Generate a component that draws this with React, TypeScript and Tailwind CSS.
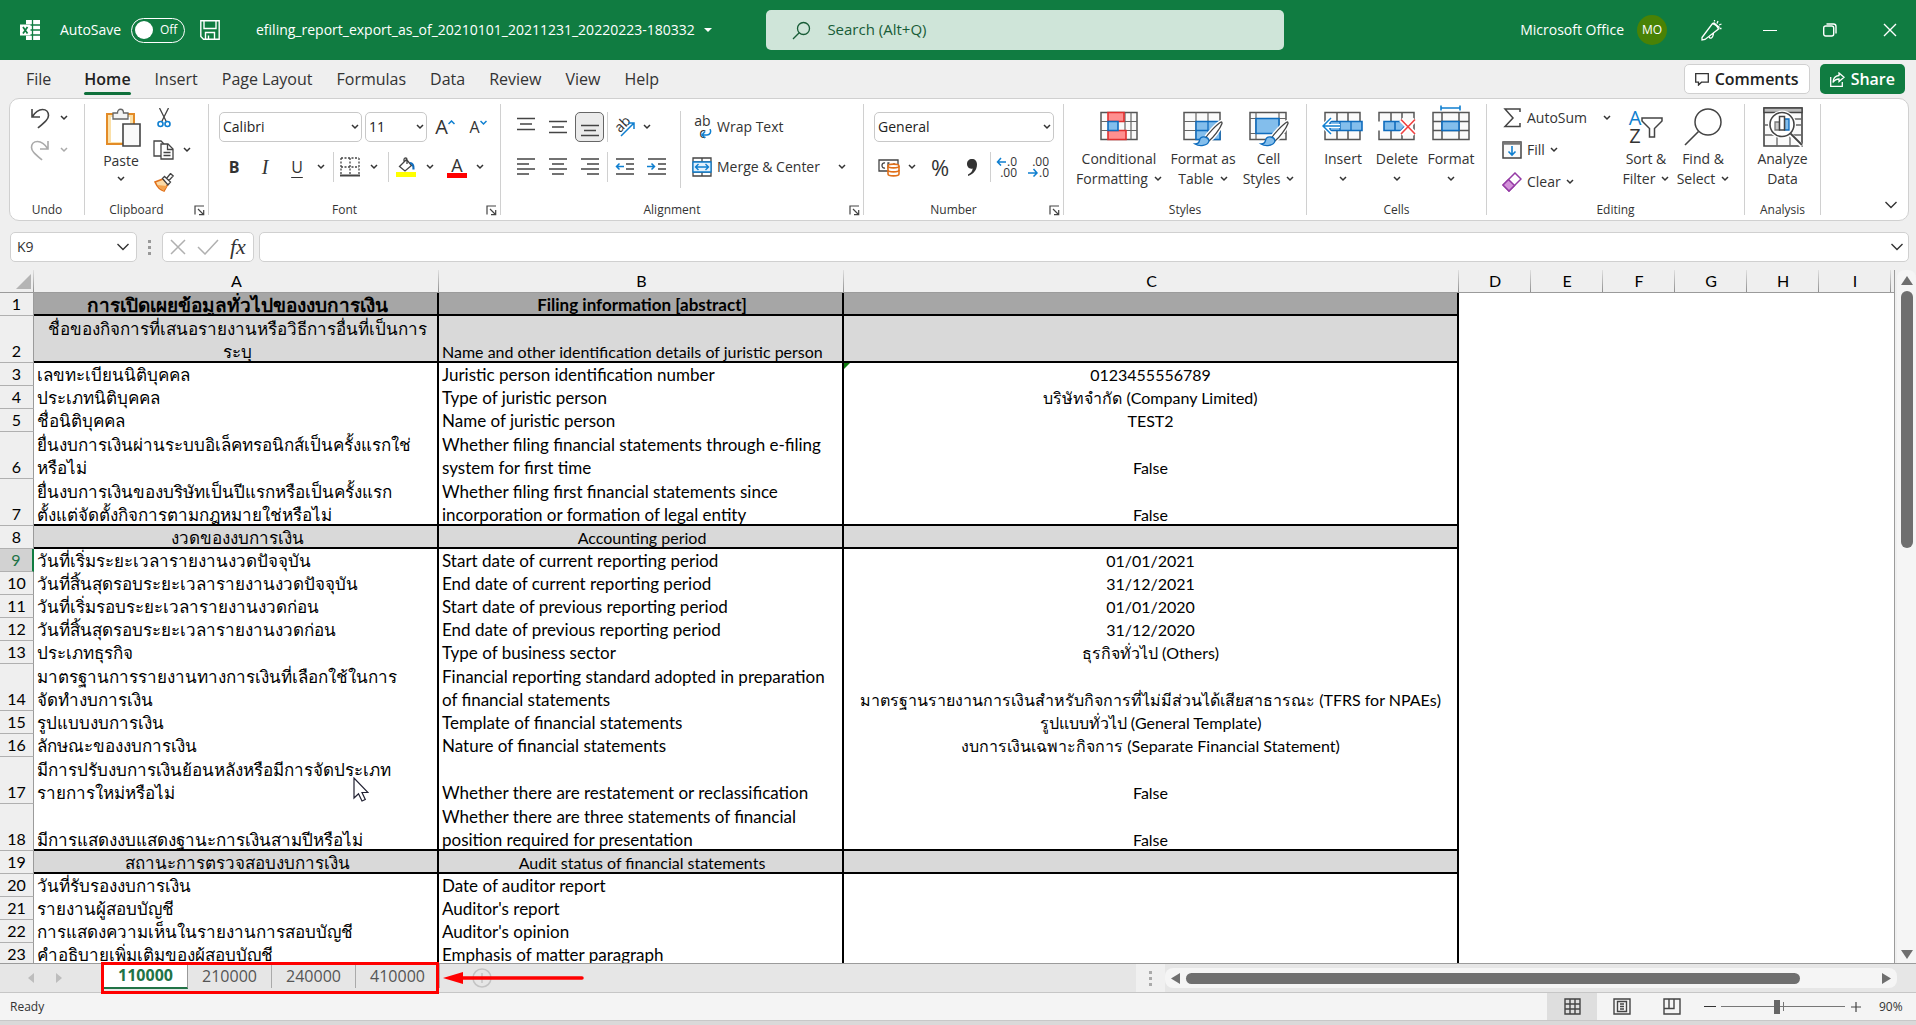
import type { ReactNode } from 'react';

const tabs = ['Insert', 'Page Layout', 'Formulas', 'Data', 'Review', 'View', 'Help'];
const sheets = ['110000', '210000', '240000', '410000'];

type Row = { kind?: 'title' | 'section'; a: string; b: string; c?: string; line?: boolean; tall?: boolean };

const rows: Row[] = [
  { kind: 'title', a: 'การเปิดเผยข้อมูลทั่วไปของงบการเงิน', b: 'Filing information [abstract]' },
  {
    kind: 'section',
    a: 'ชื่อของกิจการที่เสนอรายงานหรือวิธีการอื่นที่เป็นการ\nระบุ',
    b: 'Name and other identification details of juristic person',
    tall: true,
  },
  { a: 'เลขทะเบียนนิติบุคคล', b: 'Juristic person identification number', c: '0123455556789' },
  { a: 'ประเภทนิติบุคคล', b: 'Type of juristic person', c: 'บริษัทจำกัด (Company Limited)' },
  { a: 'ชื่อนิติบุคคล', b: 'Name of juristic person', c: 'TEST2' },
  {
    a: 'ยื่นงบการเงินผ่านระบบอิเล็คทรอนิกส์เป็นครั้งแรกใช่\nหรือไม่',
    b: 'Whether filing financial statements through e-filing\nsystem for first time',
    c: 'False',
    tall: true,
  },
  {
    a: 'ยื่นงบการเงินของบริษัทเป็นปีแรกหรือเป็นครั้งแรก\nตั้งแต่จัดตั้งกิจการตามกฎหมายใช่หรือไม่',
    b: 'Whether filing first financial statements since\nincorporation or formation of legal entity',
    c: 'False',
    tall: true,
    line: true,
  },
  { kind: 'section', a: 'งวดของงบการเงิน', b: 'Accounting period' },
  { a: 'วันที่เริ่มระยะเวลารายงานงวดปัจจุบัน', b: 'Start date of current reporting period', c: '01/01/2021' },
  { a: 'วันที่สิ้นสุดรอบระยะเวลารายงานงวดปัจจุบัน', b: 'End date of current reporting period', c: '31/12/2021' },
  { a: 'วันที่เริ่มรอบระยะเวลารายงานงวดก่อน', b: 'Start date of previous reporting period', c: '01/01/2020' },
  { a: 'วันที่สิ้นสุดรอบระยะเวลารายงานงวดก่อน', b: 'End date of previous reporting period', c: '31/12/2020' },
  { a: 'ประเภทธุรกิจ', b: 'Type of business sector', c: 'ธุรกิจทั่วไป (Others)' },
  {
    a: 'มาตรฐานการรายงานทางการเงินที่เลือกใช้ในการ\nจัดทำงบการเงิน',
    b: 'Financial reporting standard adopted in preparation\nof financial statements',
    c: 'มาตรฐานรายงานการเงินสำหรับกิจการที่ไม่มีส่วนได้เสียสาธารณะ (TFRS for NPAEs)',
    tall: true,
  },
  { a: 'รูปแบบงบการเงิน', b: 'Template of financial statements', c: 'รูปแบบทั่วไป (General Template)' },
  { a: 'ลักษณะของงบการเงิน', b: 'Nature of financial statements', c: 'งบการเงินเฉพาะกิจการ (Separate Financial Statement)' },
  {
    a: 'มีการปรับงบการเงินย้อนหลังหรือมีการจัดประเภท\nรายการใหม่หรือไม่',
    b: 'Whether there are restatement or reclassification',
    c: 'False',
    tall: true,
  },
  {
    a: 'มีการแสดงงบแสดงฐานะการเงินสามปีหรือไม่',
    b: 'Whether there are three statements of financial\nposition required for presentation',
    c: 'False',
    tall: true,
    line: true,
  },
  { kind: 'section', a: 'สถานะการตรวจสอบงบการเงิน', b: 'Audit status of financial statements' },
  { a: 'วันที่รับรองงบการเงิน', b: 'Date of auditor report' },
  { a: 'รายงานผู้สอบบัญชี', b: "Auditor's report" },
  { a: 'การแสดงความเห็นในรายงานการสอบบัญชี', b: "Auditor's opinion" },
  { a: 'คำอธิบายเพิ่มเติมของผู้สอบบัญชี', b: 'Emphasis of matter paragraph' },
];

/* Small helpers */
const Icon = ({ w, h, children }: { w: number; h: number; children: ReactNode }) => (
  <svg width={w} height={h} viewBox={`0 0 ${w} ${h}`} fill="none" stroke="#444" strokeWidth="1.3" className="shrink-0" aria-hidden="true">
    {children}
  </svg>
);

const Chevron = ({ className = 'text-[#333]' }: { className?: string }) => (
  <svg width="8" height="6" viewBox="0 0 8 6" fill="none" stroke="currentColor" strokeWidth="1.5" className={`shrink-0 ${className}`} aria-hidden="true">
    <path d="M1 1l3 3 3-3" />
  </svg>
);

const BigChevron = () => (
  <svg width="14" height="8" viewBox="0 0 14 8" fill="none" stroke="#333" strokeWidth="1.4" aria-hidden="true">
    <path d="M1.500 1l5.500 5.500L12.500 1" />
  </svg>
);

const Sep = () => <div className="h-[30px] w-px bg-[#d0d0d0]" />;

const Tool = ({ label, className = 'w-8', children }: { label: string; className?: string; children: ReactNode }) => (
  <button aria-label={label} className={`flex h-[30px] shrink-0 items-center justify-center ${className}`}>
    {children}
  </button>
);

const Group = ({ name, width, launcher, children }: { name: string; width: string; launcher?: boolean; children: ReactNode }) => (
  <section className={`flex h-[111px] shrink-0 flex-col border-r border-[#d0d0d0] ${width}`}>
    <div className="flex flex-1 items-start">{children}</div>
    <div className="flex h-[10px] shrink-0 items-center px-[2px]">
      <span className="flex-1 text-center text-xs leading-4 text-[#333]">{name}</span>
      {launcher && (
        <button aria-label={`${name} settings`} className="ml-2 block w-3">
          <svg width="11" height="11" viewBox="0 0 11 11" fill="none" stroke="#444" strokeWidth="1.2">
            <path d="M1 9.500V1h9M4 4l5.500 5.500M9.700 5v4.700H5" />
          </svg>
        </button>
      )}
    </div>
  </section>
);

const BigButton = ({ lines, width, children, chevron }: { lines: string[]; width: string; chevron?: 'inline' | 'below'; children: ReactNode }) => (
  <button className={`flex shrink-0 flex-col items-center ${width}`}>
    <span className="flex h-[45px] items-center">{children}</span>
    {lines.map((line, i) => (
      <span key={line} className="flex items-center gap-[6px] text-sm leading-5 whitespace-nowrap">
        {line}
        {chevron === 'inline' && i === lines.length - 1 && <Chevron />}
      </span>
    ))}
    {chevron === 'below' && (
      <span className="flex h-5 items-center">
        <Chevron />
      </span>
    )}
  </button>
);

const Combo = ({ label, value, width }: { label: string; value: string; width: string }) => (
  <span className={`relative flex h-[30px] items-center ${width}`}>
    <select aria-label={label} className="h-full w-full appearance-none rounded-[5px] border border-[#c8c8c8] bg-white px-[3px] text-sm text-[#222]">
      <option>{value}</option>
    </select>
    <span className="pointer-events-none absolute right-[3px]">
      <Chevron />
    </span>
  </span>
);

/* Horizontal stroke sets for the alignment buttons */
const Lines = ({ d }: { d: string }) => (
  <Icon w={20} h={20}>
    <path d={d} strokeWidth="1.500" />
  </Icon>
);

const TableGrid = () => (
  <>
    <path d="M1 7.500h36v27H1z" fill="#fafafa" stroke="#555" strokeWidth="1.500" />
    <path d="M13 7.500v27M25 7.500v27M1 16.500h36M1 25.500h36" stroke="#666" strokeWidth="1.200" />
  </>
);

const Brush = () => (
  <>
    <path d="M38 17c-5 3-13 12-15.500 16l3.500 3c4-3 11-12 13-17.500 0-1.300-.3-1.700-1-1.500z" fill="#fff" stroke="#fff" strokeWidth="4" />
    <path d="M38 17c-5 3-13 12-15.500 16l3.500 3c4-3 11-12 13-17.500 0-1.300-.3-1.700-1-1.500z" fill="#fff" stroke="#444" />
    <path d="M22 32c-3-.5-5 1-5.500 3.500-.5 2.500-2 3.500-4.500 3.500 4 2.500 13 2.500 14-3.500-.5-2-2-3.200-4-3.500z" fill="#83beec" stroke="#0f6cbd" />
  </>
);

/* Green bar */
const TitleBar = () => (
  <header className="grid h-[60px] shrink-0 grid-cols-[40fr_27fr_33fr] items-center bg-[#107c41] text-sm text-white">
    <div className="flex items-center pl-5">
      <svg width="20" height="20" viewBox="0 0 20 20" aria-hidden="true">
        <path d="M6 0h14v20H6z" fill="#fff" />
        <path d="M12.500 0v20M6 5h14M6 10h14M6 15h14" stroke="#107c41" strokeWidth="1.300" />
        <path d="M0 4.500h10.500v11H0z" fill="#fff" />
        <path d="M3 7l4.500 6.500M7.500 7L3 13.500" stroke="#107c41" strokeWidth="1.700" />
      </svg>
      <label htmlFor="autosave" className="ml-5 w-[71px]">
        AutoSave
      </label>
      <span className="relative flex h-[25px] w-[54px] items-center rounded-full border border-white">
        <input id="autosave" type="checkbox" role="switch" className="absolute inset-0 appearance-none" />
        <span className="ml-[3px] size-[18px] rounded-full bg-white" />
        <span className="ml-[7px] text-xs">Off</span>
      </span>
      <button aria-label="Save" className="ml-[15px]">
        <svg width="20" height="20" viewBox="0 0 20 20" fill="none" stroke="#fff" strokeWidth="1.400">
          <path d="M.8.800h18.400v18.400H3.500L.8 16.500zM4 1v7.500h12V1M5.500 19v-6.500h9V19M8.500 19v-3.500" />
        </svg>
      </button>
      <button className="ml-9 flex items-center gap-[9px] whitespace-nowrap">
        efiling_report_export_as_of_20210101_20211231_20220223-180332
        <svg width="8" height="4" viewBox="0 0 8 4" fill="#fff">
          <path d="M0 0h8L4 4z" />
        </svg>
      </button>
    </div>
    <div className="flex h-10 items-center rounded-[5px] bg-[#cfe5d9] pl-[26px] text-[#185c37]">
      <svg width="19" height="19" viewBox="0 0 19 19" fill="none" stroke="#185c37" strokeWidth="1.300" aria-hidden="true">
        <circle cx="11.500" cy="7.500" r="6" />
        <path d="M7.200 11.700L1 18" />
      </svg>
      <input
        aria-label="Search"
        placeholder="Search (Alt+Q)"
        className="ml-4 flex-1 bg-transparent text-[15px] outline-none placeholder:text-[#185c37]"
      />
    </div>
    <div className="flex items-center justify-end pr-[19px]">
      <span>Microsoft Office</span>
      <span className="ml-[13px] flex size-[30px] items-center justify-center rounded-full bg-[#498205] text-xs">MO</span>
      <button aria-label="Drawing" className="ml-[34px]">
        <svg width="21" height="21" viewBox="0 0 21 21" fill="none" stroke="#fff" strokeWidth="1.300">
          <path d="M1 17.500L11.500 3.500c2 .5 5 3 6 5.500L4 19.500l-3 .5zM8 16c0 3 4 3.500 4.500-3M12.500 2.500l6 5M13.500 0v1.500M17 1l-1 2.500M20.500 4L18 5M20.500 8.500h-2" />
        </svg>
      </button>
      <button aria-label="Minimize" className="ml-[41px] h-[3px] w-[14px]">
        <span className="block h-px bg-white" />
      </button>
      <button aria-label="Restore" className="ml-[46px]">
        <svg width="14" height="14" viewBox="0 0 14 14" fill="none" stroke="#fff" strokeWidth="1.400">
          <rect x=".7" y="3" width="10" height="10" rx="2" />
          <path d="M3.500 1h7c1.500 0 2.500 1 2.500 2.500v7" />
        </svg>
      </button>
      <button aria-label="Close" className="ml-[46px]">
        <svg width="14" height="14" viewBox="0 0 14 14" fill="none" stroke="#fff" strokeWidth="1.400">
          <path d="M1 1l12 12M13 1L1 13" />
        </svg>
      </button>
    </div>
  </header>
);

const MenuTabs = () => (
  <nav className="flex h-[38px] shrink-0 items-center pr-[11px] pl-[26px] text-base text-[#333]">
    <button className="mr-[33px]">File</button>
    <button className="relative mr-6 font-semibold text-[#222]">
      Home
      <span className="absolute inset-x-0 -bottom-1 h-[3px] rounded-sm bg-[#0f703b]" />
    </button>
    <div className="flex gap-6">
      {tabs.map((tab) => (
        <button key={tab}>{tab}</button>
      ))}
    </div>
    <button className="ml-auto flex h-[30px] items-center gap-[6px] rounded-[5px] border border-[#d0d0d0] bg-white px-[10px] font-semibold text-[#222]">
      <svg width="14" height="13" viewBox="0 0 14 13" fill="none" stroke="#333" strokeWidth="1.300">
        <path d="M.7.700h12.600v8.500H6.500L3.500 12V9.200H.7z" />
      </svg>
      Comments
    </button>
    <button className="ml-[10px] flex h-[30px] items-center gap-[6px] rounded-[5px] bg-[#107c41] px-[10px] font-semibold text-white">
      <svg width="15" height="15" viewBox="0 0 15 15" fill="none" stroke="#fff" strokeWidth="1.300">
        <path d="M.7 5v9.300h11.600V10M9 1l5 4.300-5 4.200V7C6 7 4.500 8 3 10.500 3.200 6 5.500 3.800 9 3.500z" />
      </svg>
      Share
    </button>
  </nav>
);

const Ribbon = () => (
  <div className="mr-[7px] ml-[9px] flex shrink-0 rounded-[10px] border border-[#d0d0d0] bg-white py-[5px] text-[#333]">
    <Group name="Undo" width="w-[75px]">
      <div className="flex w-full flex-col pl-5">
        <button aria-label="Undo" className="flex h-7 items-center gap-[10px]">
          <Icon w={20} h={22}>
            <path d="M2 2v8h8M2.300 9.700C5 5.500 8.500 2.500 12.500 2.500c4 0 6 3 6 6 0 3.500-3 6-10.500 12.500" strokeWidth="1.600" />
          </Icon>
          <Chevron />
        </button>
        <button aria-label="Redo" className="mt-1 flex h-7 items-center gap-[10px]">
          <svg width="20" height="22" viewBox="0 0 20 22" fill="none" stroke="#aaa" strokeWidth="1.600">
            <path d="M18 2v8h-8M17.700 9.700C15 5.500 11.500 2.500 7.500 2.500c-4 0-6 3-6 6C1.500 12 4.500 14.500 12 21" />
          </svg>
          <Chevron className="text-[#aaa]" />
        </button>
      </div>
    </Group>

    <Group name="Clipboard" width="w-[124px]" launcher>
      <button className="ml-[10px] flex w-[52px] flex-col items-center pt-1 text-sm leading-5">
        <span className="pl-1">
          <Icon w={36} h={40}>
            <path d="M2 6h27v30H2z" fill="#fbe0a8" stroke="#e38b27" strokeWidth="2" />
            <path d="M6 9h19v25H6z" fill="#fff" stroke="none" />
            <path d="M8 11V5h4.500c0-5 6-5 6 0H23v6z" fill="#f3f3f3" stroke="#666" />
            <path d="M18 16h17v22H18z" fill="#fafafa" stroke="#444" strokeWidth="1.600" />
          </Icon>
        </span>
        <span className="mt-[3px]">Paste</span>
        <span className="flex h-4 items-center">
          <Chevron />
        </span>
      </button>
      <div className="ml-[6px] flex flex-col">
        <button aria-label="Cut" className="flex h-7 w-[22px] items-center justify-center">
          <Icon w={14} h={20}>
            <path d="M2.500 0l7 14M11.500 0l-7 14" />
            <circle cx="3.500" cy="16" r="2.500" stroke="#0f7fd0" strokeWidth="1.600" />
            <circle cx="10.500" cy="16" r="2.500" stroke="#0f7fd0" strokeWidth="1.600" />
          </Icon>
        </button>
        <button aria-label="Copy" className="mt-1 flex h-7 items-center gap-[9px]">
          <Icon w={21} h={20}>
            <path d="M8 16H1V1h7l3 3" />
            <path d="M8 4h7l5 5v10H8z" fill="#fff" />
            <path d="M14.500 4v5.500H20M10.500 12.500h7M10.500 15.500h7" />
          </Icon>
          <Chevron />
        </button>
        <button aria-label="Format painter" className="mt-1 flex h-7 w-[22px] items-center justify-center">
          <Icon w={20} h={19}>
            <path d="M1 9l8-3 5 5-4 7C6 17 3 13.500 1 9z" fill="#fbd9a5" stroke="#e0701a" strokeWidth="1.600" />
            <path d="M3 12l10 1-3.500 5z" fill="#f3a24c" stroke="none" />
            <path d="M8.500 5.500l2-2 6 5.500-2.500 3zM12.500 5.500l4-5 2.700 2.500-4.500 4.700" fill="#fff" />
          </Icon>
        </button>
      </div>
    </Group>

    <Group name="Font" width="w-[292px]" launcher>
      <div className="flex flex-col gap-[10px] pt-2 pl-[10px]">
        <div className="flex items-center">
          <Combo label="Font" value="Calibri" width="w-[143px]" />
          <span className="w-[3px]" />
          <Combo label="Font size" value="11" width="w-[62px]" />
          <Tool label="Increase font size" className="ml-[7px] w-[22px]">
            <span className="text-xl leading-6">A</span>
            <svg width="7" height="15" viewBox="0 0 7 15" fill="none" stroke="#0f7fd0" strokeWidth="1.500">
              <path d="M.5 4l3-3 3 3" />
            </svg>
          </Tool>
          <Tool label="Decrease font size" className="ml-3 w-[20px]">
            <span className="text-base leading-6">A</span>
            <svg width="7" height="15" viewBox="0 0 7 15" fill="none" stroke="#0f7fd0" strokeWidth="1.500">
              <path d="M.5 1l3 3 3-3" />
            </svg>
          </Tool>
        </div>
        <div className="flex items-center">
          <Tool label="Bold" className="w-[30px]">
            <span className="text-base font-bold">B</span>
          </Tool>
          <Tool label="Italic">
            <span className="font-['Liberation_Serif',serif] text-xl italic">I</span>
          </Tool>
          <Tool label="Underline">
            <span className="text-base leading-5 underline underline-offset-4">U</span>
          </Tool>
          <Tool label="Underline style" className="w-[16px]">
            <Chevron />
          </Tool>
          <span className="w-1" />
          <Sep />
          <Tool label="Borders">
            <Icon w={20} h={20}>
              <path d="M1 1h18M1 1v17M19 1v17M10 1v17M1 10h18" strokeDasharray="2 1.500" />
              <path d="M0 18.500h20" strokeWidth="2" />
            </Icon>
          </Tool>
          <Tool label="Border style" className="w-[16px]">
            <Chevron />
          </Tool>
          <span className="w-[6px]" />
          <Sep />
          <Tool label="Fill color" className="w-[34px]">
            <Icon w={20} h={20}>
              <path d="M3.500 9.500l7-7 5 6-6.500 5.500zM8 6V2.500C8 .5 11 .5 11 2.500V7" />
              <path d="M14 6c2 0 4 2 3.500 6.500" stroke="#0f6cbd" strokeWidth="2.200" />
              <path d="M0 15h20v5H0z" fill="#ff0" stroke="none" />
            </Icon>
          </Tool>
          <Tool label="Fill options" className="w-[14px]">
            <Chevron />
          </Tool>
          <Tool label="Font color" className="ml-1 w-8">
            <span className="flex flex-col items-center">
              <span className="h-4 text-lg leading-4">A</span>
              <span className="h-[5px] w-5 bg-[#f00]" />
            </span>
          </Tool>
          <Tool label="Font color options" className="w-[14px]">
            <Chevron />
          </Tool>
        </div>
      </div>
    </Group>

    <Group name="Alignment" width="w-[363px]" launcher>
      <div className="flex flex-col gap-[10px] pt-2 pl-[9px]">
        <div className="flex items-center">
          <Tool label="Top align">
            <Lines d="M1 1.500h18M4 7h12M1 12.500h18" />
          </Tool>
          <Tool label="Middle align">
            <Lines d="M1 4.500h18M4 10h12M1 15.500h18" />
          </Tool>
          <Tool label="Bottom align" className="ml-px w-[29px] rounded-[5px] border border-[#666] bg-[#ebebeb]">
            <Lines d="M1 8.500h18M4 13.500h12M1 18.500h18" />
          </Tool>
          <span className="w-[3px]" />
          <Sep />
          <Tool label="Orientation" className="w-[34px]">
            <span className="relative size-5">
              <span className="absolute -top-px -left-px -rotate-45 text-sm leading-4">ab</span>
              <svg width="20" height="20" viewBox="0 0 20 20" fill="none" stroke="#0f7fd0" strokeWidth="1.500" className="absolute inset-0">
                <path d="M6 19L19 6M13 6h6v6" />
              </svg>
            </span>
          </Tool>
          <Tool label="Orientation options" className="w-[10px]">
            <Chevron />
          </Tool>
        </div>
        <div className="flex items-center">
          <Tool label="Align left">
            <Lines d="M1 2h18M1 7h12M1 12h18M1 17h12" />
          </Tool>
          <Tool label="Align center">
            <Lines d="M1 2h18M4 7h12M1 12h18M4 17h12" />
          </Tool>
          <Tool label="Align right">
            <Lines d="M1 2h18M7 7h12M1 12h18M7 17h12" />
          </Tool>
          <span className="w-px" />
          <Sep />
          <Tool label="Decrease indent" className="w-[34px]">
            <Icon w={20} h={20}>
              <path d="M1 2h18M11 7h8M11 12h8M1 17h18" strokeWidth="1.500" />
              <path d="M9 9.500H1.500M4.500 6.500l-3 3 3 3" stroke="#0f7fd0" strokeWidth="1.500" />
            </Icon>
          </Tool>
          <Tool label="Increase indent" className="w-[30px]">
            <Icon w={20} h={20}>
              <path d="M1 2h18M11 7h8M11 12h8M1 17h18" strokeWidth="1.500" />
              <path d="M0 9.500h7.500M4.500 6.500l3 3-3 3" stroke="#0f7fd0" strokeWidth="1.500" />
            </Icon>
          </Tool>
        </div>
      </div>
      <div className="mt-[7px] ml-2 h-[77px] w-px bg-[#d0d0d0]" />
      <div className="flex flex-col gap-[10px] pt-2 pl-[11px] text-sm">
        <button className="flex h-[30px] items-center gap-[5px]">
          <span className="relative flex h-6 w-5 flex-col pl-px text-sm leading-3">
            <span>ab</span>
            <span>c</span>
            <svg width="11" height="10" viewBox="0 0 11 10" fill="none" stroke="#0f7fd0" strokeWidth="1.500" className="absolute right-0 bottom-0">
              <path d="M9 0c1.500 3 0 6-3 6H1M4 2.500L1 6l3 3" />
            </svg>
          </span>
          Wrap Text
        </button>
        <div className="flex h-[30px] items-center">
          <button className="flex items-center gap-[5px]">
            <Icon w={20} h={20}>
              <path d="M1 1h18v18H1zM10 1v18M1 5h18M1 15h18" />
              <path d="M1 5h18v10H1z" fill="#e3f1fb" stroke="#0f7fd0" />
              <path d="M3.500 10h13M6.500 7l-3 3 3 3M13.500 7l3 3-3 3" stroke="#0f7fd0" strokeWidth="1.400" />
            </Icon>
            Merge &amp; Center
          </button>
          <button aria-label="Merge options" className="ml-[18px]">
            <Chevron />
          </button>
        </div>
      </div>
    </Group>

    <Group name="Number" width="w-[200px]" launcher>
      <div className="flex flex-col gap-[10px] pt-2 pl-[10px]">
        <Combo label="Number format" value="General" width="w-[180px]" />
        <div className="flex items-center">
          <Tool label="Accounting format" className="w-[30px]">
            <Icon w={22} h={20}>
              <path d="M1 3h19v11H1z" />
              <path d="M7 6c-4-1-4 6 0 5M11.500 6h-1.500v5h3M16 6v5" />
              <path d="M10 9c0-2.500 11-2.500 11 0v8c0 2.500-11 2.500-11 0z" fill="#fff" stroke="#e0701a" strokeWidth="1.600" />
              <path d="M10 9c0 2.500 11 2.500 11 0M10 13c0 2.500 11 2.500 11 0" stroke="#e0701a" strokeWidth="1.600" />
            </Icon>
          </Tool>
          <Tool label="Accounting options" className="w-[16px]">
            <Chevron />
          </Tool>
          <Tool label="Percent style" className="ml-[3px] w-[34px]">
            <span className="text-[22px] leading-6">%</span>
          </Tool>
          <Tool label="Comma style" className="w-[30px]">
            <svg width="10" height="17" viewBox="0 0 10 17" fill="#333">
              <path d="M5 0c3 0 5 2 5 5.500C10 11 6 15.500 1 17v-1.500c3-1.500 4.500-3.500 4.700-6C2.500 10.500 0 8 0 5c0-3 2-5 5-5z" />
            </svg>
          </Tool>
          <span className="w-[3px]" />
          <Sep />
          <Tool label="Increase decimal">
            <span className="relative flex h-[22px] w-5 flex-col items-end text-xs leading-[11px]">
              <span>.0</span>
              <span>.00</span>
              <svg width="10" height="9" viewBox="0 0 10 9" fill="none" stroke="#0f7fd0" strokeWidth="1.500" className="absolute top-px -left-px">
                <path d="M10 5H1.500M5 1L1.500 5 5 8.500" />
              </svg>
            </span>
          </Tool>
          <Tool label="Decrease decimal">
            <span className="relative flex h-[22px] w-5 flex-col items-end text-xs leading-[11px]">
              <span>.00</span>
              <span>.0</span>
              <svg width="11" height="9" viewBox="0 0 11 9" fill="none" stroke="#0f7fd0" strokeWidth="1.500" className="absolute bottom-px -left-px">
                <path d="M0 5h9M5.500 1L9 5 5.500 8.500" />
              </svg>
            </span>
          </Tool>
        </div>
      </div>
    </Group>

    <Group name="Styles" width="w-[243px]">
      <div className="flex gap-[2px] pl-2">
        <BigButton lines={['Conditional', 'Formatting']} width="w-[94px]" chevron="inline">
          <Icon w={38} h={44}>
            <TableGrid />
            <path d="M31 7.500v27" stroke="#666" strokeWidth="1.200" />
            <path d="M8 7.500h16v9H8zM8 25.500h18v9H8z" fill="#ff8f8f" stroke="#e03030" strokeWidth="1.600" />
            <path d="M8 16.500h10v9H8z" fill="#83beec" stroke="#0f6cbd" strokeWidth="1.600" />
          </Icon>
        </BigButton>
        <BigButton lines={['Format as', 'Table']} width="w-[70px]" chevron="inline">
          <Icon w={40} h={44}>
            <TableGrid />
            <path d="M13 16.500h24v18H13z" fill="#83beec" stroke="#0f6cbd" strokeWidth="1.500" />
            <path d="M25 16.500v18M13 25.500h24" stroke="#0f6cbd" />
            <Brush />
          </Icon>
        </BigButton>
        <BigButton lines={['Cell', 'Styles']} width="w-[57px]" chevron="inline">
          <Icon w={40} h={44}>
            <path d="M1 7.500h36v27H1z" fill="#fafafa" stroke="#555" strokeWidth="1.500" />
            <path d="M7 7.500v27M30 7.500v27M1 13.500h36M1 28.500h36" stroke="#666" strokeWidth="1.200" />
            <path d="M7 13.500h23v15H7z" fill="#83beec" stroke="#0f6cbd" strokeWidth="1.600" />
            <Brush />
          </Icon>
        </BigButton>
      </div>
    </Group>

    <Group name="Cells" width="w-[180px]">
      <div className="flex pl-[9px]">
        <BigButton lines={['Insert']} width="w-[54px]" chevron="below">
          <Icon w={42} h={44}>
            <path d="M3 7.500h35v27H3zM15 7.500v27M26 7.500v27" fill="#fafafa" stroke="#555" strokeWidth="1.500" />
            <path d="M8 16.500h32v9H8z" fill="#83beec" stroke="#0f6cbd" strokeWidth="1.600" />
            <path d="M18 16.500v9M29 16.500v9" stroke="#0f6cbd" />
            <path d="M18 21H2M9 13l-8 8 8 8" stroke="#fff" strokeWidth="4" />
            <path d="M18 21H2M9 13l-8 8 8 8" stroke="#0f7fd0" strokeWidth="1.500" />
          </Icon>
        </BigButton>
        <BigButton lines={['Delete']} width="w-[54px]" chevron="below">
          <Icon w={38} h={44}>
            <path d="M1 7.500h35v27H1zM13 7.500v27M24 7.500v27" fill="#fafafa" stroke="#555" strokeWidth="1.500" />
            <path d="M0 16.500h24v9H0z" fill="#fff" stroke="none" />
            <path d="M6 16.500h17l4 4.500-4 4.500H6zM17 16.500v9" fill="#83beec" stroke="#0f6cbd" strokeWidth="1.600" />
            <path d="M23 14.500L37 29M37 14.500L23 29" stroke="#fff" strokeWidth="5" />
            <path d="M23 14.500L37 29M37 14.500L23 29" stroke="#f04040" strokeWidth="1.600" />
          </Icon>
        </BigButton>
        <BigButton lines={['Format']} width="w-[54px]" chevron="below">
          <Icon w={38} h={44}>
            <path d="M1 7.500h36v27H1zM10 7.500v27M27 7.500v27M1 16.500h36M1 25.500h36" fill="#fafafa" stroke="#555" strokeWidth="1.500" />
            <path d="M10 16.500h17v9H10z" fill="#83beec" stroke="#0f6cbd" strokeWidth="1.600" />
            <path d="M9 3h19M9 .5v5M28 .5v5" stroke="#0f7fd0" strokeWidth="1.600" />
          </Icon>
        </BigButton>
      </div>
    </Group>

    <Group name="Editing" width="w-[258px]">
      <div className="flex w-[132px] flex-col pl-[15px] text-sm">
        <div className="flex h-7 items-center">
          <button className="flex items-center gap-[5px]">
            <Icon w={20} h={20}>
              <path d="M18 4V1H3l8 9-8 8.500h15V15" strokeWidth="1.500" />
            </Icon>
            AutoSum
          </button>
          <button aria-label="AutoSum options" className="ml-4">
            <Chevron />
          </button>
        </div>
        <button className="mt-1 flex h-7 items-center gap-[5px]">
          <Icon w={20} h={18}>
            <path d="M1 1h18v16H1z" fill="#fafafa" strokeWidth="1.500" />
            <path d="M1 2.500h18" stroke="#777" strokeWidth="2.500" />
            <path d="M10 5v9M6.500 10.500L10 14l3.500-3.500" stroke="#0f7fd0" strokeWidth="1.600" />
          </Icon>
          Fill
          <Chevron />
        </button>
        <button className="mt-1 flex h-7 items-center gap-[5px]">
          <Icon w={20} h={20}>
            <path d="M13 1l6 6L7 19l-6-6z" fill="#fff" stroke="#953ba5" strokeWidth="1.500" />
            <path d="M6.500 7.500l6 6L7 19l-6-6z" fill="#d391da" stroke="#953ba5" strokeWidth="1.500" />
          </Icon>
          Clear
          <Chevron />
        </button>
      </div>
      <BigButton lines={['Sort &', 'Filter']} width="w-[54px]" chevron="inline">
        <span className="flex items-center">
          <span className="flex flex-col items-center text-xl leading-[18px]">
            <span className="text-[#0f7fd0]">A</span>
            <span>Z</span>
          </span>
          <Icon w={22} h={24}>
            <path d="M1 3h20v3l-7.500 7.500v8.500h-5v-8.500L1 6z" strokeWidth="1.500" />
          </Icon>
        </span>
      </BigButton>
      <BigButton lines={['Find &', 'Select']} width="w-[60px]" chevron="inline">
        <Icon w={38} h={40}>
          <circle cx="24" cy="15" r="13" strokeWidth="1.500" />
          <path d="M14.500 24.500L1 38" strokeWidth="1.600" />
        </Icon>
      </BigButton>
    </Group>

    <Group name="Analysis" width="w-[76px]">
      <BigButton lines={['Analyze', 'Data']} width="w-[75px]">
        <Icon w={40} h={40}>
          <path d="M1 1h38v38H1z" fill="#fafafa" strokeWidth="1.600" />
          <path d="M1 1h38v4.500H1z" fill="#bbb" />
          <path d="M1 18h38M1 28h38M14 28v11M27 28v11M30 12h9" stroke="#666" />
          <path d="M27 27l12 12" stroke="#fff" strokeWidth="4" />
          <circle cx="19" cy="17.500" r="14" fill="#fff" stroke="none" />
          <circle cx="19" cy="17.500" r="12" fill="#fff" strokeWidth="1.600" />
          <path d="M27.500 26.500L39 38" strokeWidth="1.800" />
          <path d="M12 15h4.500v8H12z" fill="#ccc" stroke="#777" />
          <path d="M21.500 12H26v11h-4.500z" fill="#83beec" stroke="#0f6cbd" />
          <path d="M16.500 9.500h5V23h-5z" fill="#fff" strokeWidth="1.500" />
        </Icon>
      </BigButton>
    </Group>

    <button aria-label="Collapse ribbon" className="mr-[10px] mb-[6px] ml-auto self-end">
      <BigChevron />
    </button>
  </div>
);

const FormulaBar = () => (
  <div className="flex shrink-0 items-center pt-[11px] pr-[7px] pl-[10px]">
    <div className="flex h-[30px] w-[127px] items-center rounded-[5px] border border-[#d0d0d0] bg-white pr-[6px] pl-[6px]">
      <input aria-label="Name box" defaultValue="K9" className="w-full text-sm text-[#333] outline-none" />
      <button aria-label="Open name list">
        <BigChevron />
      </button>
    </div>
    <div className="flex w-[25px] flex-col items-center gap-[3px]">
      <span className="size-[3px] bg-[#999]" />
      <span className="size-[3px] bg-[#999]" />
      <span className="size-[3px] bg-[#999]" />
    </div>
    <div className="flex h-[30px] w-[92px] items-center rounded-[5px] border border-[#d0d0d0] bg-white pl-[7px]">
      <svg width="50" height="16" viewBox="0 0 50 16" fill="none" stroke="#b0b0b0" strokeWidth="1.500" aria-hidden="true">
        <path d="M1 1l14 14M15 1L1 15M28 8l7 7L48 1" />
      </svg>
      <button aria-label="Insert function" className="ml-[10px] font-['Liberation_Serif',serif] text-[22px] leading-6 text-[#333] italic">
        fx
      </button>
    </div>
    <div className="ml-[5px] flex h-[30px] flex-1 items-center rounded-[5px] border border-[#d0d0d0] bg-white pr-1 pl-2">
      <input aria-label="Formula" className="flex-1 text-sm outline-none" />
      <button aria-label="Expand formula bar">
        <BigChevron />
      </button>
    </div>
  </div>
);

const colLine = 'bg-linear-to-b from-[#e0e0e0] to-[#8f8f8f] bg-[length:1px_100%] bg-right bg-no-repeat';

const cellStyle = (row: Row) => {
  if (row.kind === 'title') return 'bg-[#a6a6a6] text-center font-bold shadow-[inset_0_-2px_0_#000]';
  if (row.kind === 'section') return 'bg-[#d9d9d9] text-center shadow-[inset_0_-2px_0_#000]';
  return row.line ? 'shadow-[inset_0_-2px_0_#000]' : '';
};

const Sheet = () => (
  <div className="flex min-h-0 flex-1 pt-2">
    <div className="min-w-0 flex-1 overflow-hidden border-r border-[#9b9b9b] bg-white">
      <table className="w-full table-fixed border-separate border-spacing-0 font-[Lato,'Noto_Sans',sans-serif] text-[17px] leading-[23px] text-black">
        <colgroup>
          <col className="w-[34px]" />
          <col className="w-[405px]" />
          <col className="w-[405px]" />
          <col className="w-[615px]" />
          {['D', 'E', 'F', 'G', 'H', 'I'].map((c) => (
            <col key={c} className="w-[72px]" />
          ))}
          <col />
        </colgroup>
        <thead>
          <tr className="h-[23px] bg-[#efefef] text-base">
            <th className={`border-b border-[#9b9b9b] p-0 ${colLine}`}>
              <svg width="15" height="15" viewBox="0 0 15 15" fill="#b4b4b4" className="ml-4" aria-label="Select all">
                <path d="M15 0v15H0z" />
              </svg>
            </th>
            {['A', 'B', 'C', 'D', 'E', 'F', 'G', 'H', 'I'].map((c) => (
              <th key={c} className={`border-b border-[#9b9b9b] p-0 leading-[22px] font-normal ${colLine}`}>
                {c}
              </th>
            ))}
            <th className="border-b border-[#9b9b9b] p-0" />
          </tr>
        </thead>
        <tbody>
          {rows.map((row, i) => {
            const active = i === 8;
            const style = cellStyle(row);
            return (
              <tr key={row.b} className={row.tall ? 'h-[47px]' : 'h-[23px]'}>
                <th
                  scope="row"
                  className={`border-b border-[#b0b0b0] p-0 align-bottom text-base leading-[22px] font-normal ${
                    active ? 'border-r-2 border-r-[#107c41] bg-[#d2d2d2] text-[#217346]' : 'border-r border-r-[#9b9b9b] bg-[#efefef]'
                  }`}
                >
                  {i + 1}
                </th>
                <td
                  className={`overflow-hidden border-r-2 border-black py-0 pr-0 pl-[3px] align-bottom whitespace-pre ${style} ${
                    row.kind === 'title' ? 'text-[19px] leading-[23px]' : ''
                  }`}
                >
                  {row.a}
                </td>
                <td
                  className={`overflow-hidden border-r-2 border-black py-0 pr-0 pl-[3px] align-bottom whitespace-pre ${style} ${
                    row.kind === 'section' ? 'text-base leading-[23px]' : ''
                  } ${row.tall ? '!text-left' : ''}`}
                >
                  {row.b}
                </td>
                <td className={`relative border-r-2 border-black p-0 text-center align-bottom text-base leading-[23px] whitespace-pre ${style}`}>
                  {i === 2 && (
                    <svg width="6" height="6" viewBox="0 0 6 6" fill="#107c10" className="absolute top-0 left-0" aria-hidden="true">
                      <path d="M0 0h6L0 6z" />
                    </svg>
                  )}
                  {row.c}
                </td>
                <td colSpan={7} className="p-0" />
              </tr>
            );
          })}
        </tbody>
      </table>
    </div>
    {/* Vertical scroll bar */}
    <div className="ml-[2px] flex w-[19px] flex-col items-center rounded-t-lg bg-[#f5f5f5] pt-[6px] pb-1">
      <svg width="12" height="9" viewBox="0 0 12 9" fill="#6f6f6f" aria-hidden="true">
        <path d="M6 0l6 9H0z" />
      </svg>
      <div className="mt-[6px] flex w-3 flex-1 flex-col">
        <div className="h-[39%] rounded-md bg-[#6f6f6f]" />
      </div>
      <svg width="12" height="9" viewBox="0 0 12 9" fill="#6f6f6f" aria-hidden="true">
        <path d="M0 0h12L6 9z" />
      </svg>
    </div>
  </div>
);

const SheetTabs = () => (
  <div className="relative flex h-[30px] shrink-0 items-start border-y border-t-[#9b9b9b] border-b-[#c6c6c6] bg-[#e6e6e6]">
    <div className="flex h-7 w-[104px] items-center gap-[22px] pl-7">
      <svg width="6" height="10" viewBox="0 0 6 10" fill="#bdbdbd" aria-hidden="true">
        <path d="M6 0v10L0 5z" />
      </svg>
      <svg width="6" height="10" viewBox="0 0 6 10" fill="#bdbdbd" aria-hidden="true">
        <path d="M0 0v10l6-5z" />
      </svg>
    </div>
    {sheets.map((name, i) => (
      <button
        key={name}
        className={
          i === 0
            ? 'h-[25px] w-[84px] border-r border-b-2 border-r-[#999] border-b-[#217346] bg-white pb-[2px] text-base leading-5 font-bold text-[#217346]'
            : 'h-6 w-[84px] text-base leading-5 text-[#555] not-last:border-r not-last:border-[#aaa]'
        }
      >
        {name}
      </button>
    ))}
    <button aria-label="New sheet" className="mt-1 ml-8">
      <svg width="20" height="20" viewBox="0 0 20 20" fill="none" stroke="#c3c3c3" strokeWidth="1.500">
        <circle cx="10" cy="10" r="9" />
        <path d="M10 5v10M5 10h10" />
      </svg>
    </button>
    <div className="ml-auto flex h-7 w-[780px] items-center">
      <div className="flex h-full w-[29px] flex-col items-center justify-center gap-[3px] bg-[#f0f0f0]">
        <span className="size-[3px] bg-[#aaa]" />
        <span className="size-[3px] bg-[#aaa]" />
        <span className="size-[3px] bg-[#aaa]" />
      </div>
      <div className="flex h-5 flex-1 items-center rounded-lg bg-[#f5f5f5] px-[6px]">
        <svg width="9" height="11" viewBox="0 0 9 11" fill="#6f6f6f" aria-hidden="true">
          <path d="M9 0v11L0 5.500z" />
        </svg>
        <div className="mx-[6px] flex-1">
          <div className="h-[11px] w-[89%] rounded-full bg-[#6f6f6f]" />
        </div>
        <svg width="9" height="11" viewBox="0 0 9 11" fill="#6f6f6f" aria-hidden="true">
          <path d="M0 0v11l9-5.500z" />
        </svg>
      </div>
      <span className="w-[19px]" />
    </div>
    {/* Callout around the sheet names */}
    <div className="pointer-events-none absolute -top-[2px] left-[101px] flex items-center">
      <div className="h-8 w-[338px] border-[3px] border-[#f00]" />
      <svg width="142" height="14" viewBox="0 0 142 14" className="ml-1" aria-hidden="true">
        <path d="M18 7h121" stroke="#f00" strokeWidth="3.500" strokeLinecap="round" />
        <path d="M0 7l20-6v12z" fill="#f00" />
      </svg>
    </div>
  </div>
);

const StatusBar = () => (
  <footer className="flex h-[27px] shrink-0 items-center bg-[#f4f4f4] pl-[10px] text-xs text-[#333]">
    <span>Ready</span>
    <div className="ml-auto flex h-full items-center">
      <button aria-label="Normal view" className="flex h-full w-[50px] items-center justify-center bg-[#dedede]">
        <Icon w={17} h={17}>
          <path d="M1 1h15v15H1zM6 1v15M11 1v15M1 6h15M1 11h15" strokeWidth="1.400" />
        </Icon>
      </button>
      <button aria-label="Page layout view" className="flex w-[50px] justify-center">
        <Icon w={18} h={17}>
          <path d="M1 1h16v15H1zM4.500 3.500h9v10h-9zM7 6h4M7 8.500h4M7 11h4" strokeWidth="1.400" />
        </Icon>
      </button>
      <button aria-label="Page break preview" className="flex w-[50px] justify-center">
        <Icon w={18} h={17}>
          <path d="M1 1h16v15H1zM1 10.500h10V1M6 1v9.500" strokeWidth="1.400" />
        </Icon>
      </button>
      <button aria-label="Zoom out" className="ml-[7px] h-px w-3">
        <span className="block h-px bg-[#333]" />
      </button>
      <input
        type="range"
        aria-label="Zoom"
        min="0"
        max="100"
        defaultValue="45"
        className="mx-[5px] h-[14px] w-[124px] appearance-none bg-[linear-gradient(#777,#777),linear-gradient(#777,#777)] bg-[length:100%_1px,1px_9px] bg-center bg-no-repeat [&::-webkit-slider-thumb]:h-[14px] [&::-webkit-slider-thumb]:w-[6px] [&::-webkit-slider-thumb]:appearance-none [&::-webkit-slider-thumb]:bg-[#666]"
      />
      <button aria-label="Zoom in">
        <Icon w={12} h={12}>
          <path d="M1 6h10M6 1v10" strokeWidth="1.200" />
        </Icon>
      </button>
      <span className="ml-[17px] w-[37px]">90%</span>
    </div>
  </footer>
);

const App = () => {
  return (
    <div className="relative flex h-screen flex-col overflow-hidden bg-[#efefef] font-['Open_Sans',sans-serif]">
      <TitleBar />
      <MenuTabs />
      <Ribbon />
      <FormulaBar />
      <Sheet />
      <SheetTabs />
      <StatusBar />
      <div className="h-[5px] shrink-0 border-t border-[#c8c8c8] bg-[#d9d9d9]" />
      {/* Mouse pointer */}
      <svg width="16" height="25" viewBox="0 0 16 25" className="pointer-events-none absolute top-[777px] left-[353px]" aria-hidden="true">
        <path d="M1 1v20l4.500-4.300L9 24l3.300-1.500L9 15.500h6z" fill="#fff" stroke="#223" strokeWidth="1.200" />
      </svg>
    </div>
  );
};

export default App;
